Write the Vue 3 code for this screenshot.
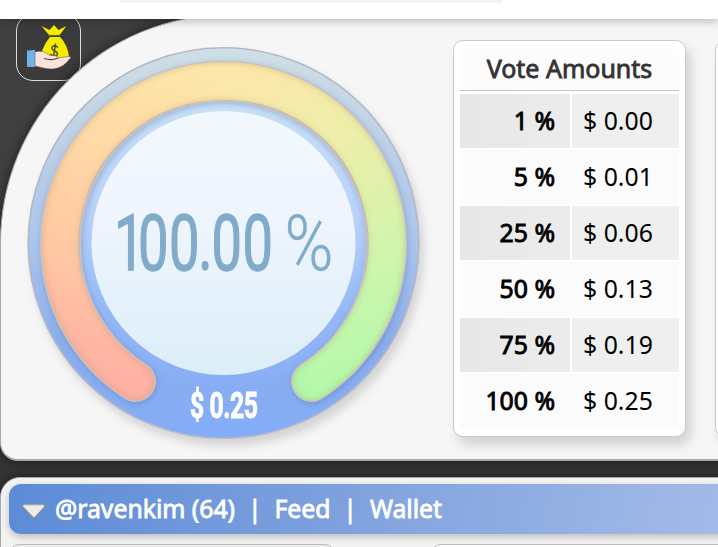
<script setup>
const votes = [
  { percent: '1 %', amount: '$ 0.00' },
  { percent: '5 %', amount: '$ 0.01' },
  { percent: '25 %', amount: '$ 0.06' },
  { percent: '50 %', amount: '$ 0.13' },
  { percent: '75 %', amount: '$ 0.19' },
  { percent: '100 %', amount: '$ 0.25' },
]
// gauge arc: two halves that meet at the top of the dial
const left = 'M111.5 339.5A163 163 0 0 1 200 38'
const right = 'M199 38A163 163 0 0 1 287.5 339.5'
const arc = 'M111.5 339.5A163 163 0 1 1 287.5 339.5'
</script>

<template>
  <div class="page">
    <header class="top"><div class="field"></div></header>

    <div class="money">
      <svg viewBox="0 0 65 66" width="65" height="66">
        <path d="M24.500 11l8 4 4.500-5 4.500 5 8-4-7 9H32z" fill="#f7ec00" />
        <path d="M31 20.500h13" stroke="#6b6500" stroke-width="1.200" />
        <path d="M33 22h10c5 5 8.500 13 9 20q-1 3-7 3H28q-4 0-4-5c1-6 5-13 9-18z" fill="#f7ec00" />
        <path d="M41 32.500q-3-3-5.500-1c-3 3.500 5.500 4.500 5 7.500-1 3.500-5 2-7 0M38.500 28.500l-2 14" fill="none" stroke="#4c4c20" stroke-width="1.500" />
        <path d="M10 35.500l8-.5v17h-8z" fill="#6db4ef" />
        <path d="M18 37c6-2 10 0 14 3 4 1 9 0 9 3l10-1.500c4 0 3 2 1 3-4 6-11 9.500-17 9.500-6 0-12-2-17-3z" fill="#fbe3da" stroke="#55403c" stroke-width=".5" />
        <path d="M27 43.500q8 2.500 14-.5" fill="none" stroke="#55403c" stroke-width="1.200" />
      </svg>
    </div>

    <section class="panel">
      <div class="dial">
        <svg viewBox="0 0 400 400" width="400" height="400">
          <defs>
            <linearGradient id="rim" x1="0" y1="0" x2="0" y2="1">
              <stop offset="0" stop-color="#cfdfe5" /><stop offset=".25" stop-color="#bdd0e6" />
              <stop offset=".5" stop-color="#abc5ed" /><stop offset=".75" stop-color="#8caeeb" /><stop offset="1" stop-color="#83adf9" />
            </linearGradient>
            <linearGradient id="halo" gradientUnits="userSpaceOnUse" x1="0" y1="55" x2="0" y2="345">
              <stop offset="0" stop-color="#cce2f6" /><stop offset=".4" stop-color="#b9d3fb" />
              <stop offset=".75" stop-color="#94b8f7" /><stop offset="1" stop-color="#88adf5" />
            </linearGradient>
            <linearGradient id="disc" x1="0" y1="0" x2="0" y2="1">
              <stop offset="0" stop-color="#f1f9fe" /><stop offset=".4" stop-color="#eef5fd" /><stop offset="1" stop-color="#dceef9" />
            </linearGradient>
            <linearGradient id="warm" gradientUnits="userSpaceOnUse" x1="199" y1="38" x2="90" y2="350">
              <stop offset="0" stop-color="#fde7a9" /><stop offset=".3" stop-color="#ffd9a6" />
              <stop offset=".65" stop-color="#ffc8a3" /><stop offset=".88" stop-color="#ffb6a4" /><stop offset="1" stop-color="#ffb0a3" />
            </linearGradient>
            <linearGradient id="cool" gradientUnits="userSpaceOnUse" x1="199" y1="38" x2="310" y2="350">
              <stop offset="0" stop-color="#fde7a9" /><stop offset=".3" stop-color="#ecefaa" />
              <stop offset=".6" stop-color="#d5f4ac" /><stop offset=".85" stop-color="#bff8ac" /><stop offset="1" stop-color="#b4f8aa" />
            </linearGradient>
            <filter id="soft" x="-10%" y="-10%" width="120%" height="120%"><feGaussianBlur stdDeviation="3" /></filter>
            <mask id="band" maskUnits="userSpaceOnUse" x="0" y="0" width="400" height="400">
              <path :d="arc" fill="none" stroke="#fff" stroke-width="38" stroke-linecap="round" />
            </mask>
            <mask id="edge" maskUnits="userSpaceOnUse" x="0" y="0" width="400" height="400">
              <rect width="400" height="400" fill="#fff" />
              <path :d="arc" fill="none" stroke="#000" stroke-width="36" stroke-linecap="round" filter="url(#soft)" />
            </mask>
          </defs>
          <circle cx="199.500" cy="201" r="195.300" fill="url(#rim)" stroke="#b3b8c8" stroke-width="1.600" />
          <circle cx="199.500" cy="201" r="143" fill="url(#halo)" />
          <path :d="arc" transform="translate(1 2)" fill="none" stroke="#5275a8" stroke-opacity=".42" stroke-width="41" stroke-linecap="round" filter="url(#soft)" />
          <circle cx="199.500" cy="201" r="132" fill="url(#disc)" />
          <path :d="arc" fill="none" stroke="#c9c3c6" stroke-width="41" stroke-linecap="round" />
          <g mask="url(#band)" fill="none">
            <path :d="left" stroke="url(#warm)" stroke-width="40" />
            <path d="M111.500 339.500h.1" stroke="#ffb1a3" stroke-width="40" stroke-linecap="round" />
            <path d="M287.500 339.500h.1" stroke="#b4f8aa" stroke-width="40" stroke-linecap="round" />
            <path :d="left" stroke="url(#warm)" stroke-width="40" />
            <path :d="right" stroke="url(#cool)" stroke-width="40" />
            <path :d="arc" stroke="#a08050" stroke-opacity=".27" stroke-width="45" stroke-linecap="round" mask="url(#edge)" />
          </g>
          <text class="percent" transform="translate(0 227.500) scale(.7 1)" x="128.500 163 207.300 249 267.800 312">100.00</text>
          <text class="sign" transform="translate(260.500 227.500) scale(.86 1)">%</text>
          <text class="worth" transform="translate(166 375.500) scale(.66 1)" textLength="103" lengthAdjust="spacing">$ 0.25</text>
        </svg>
      </div>

      <div class="card">
        <h2>Vote Amounts</h2>
        <div v-for="v in votes" :key="v.percent" class="row">
          <span class="pct">{{ v.percent }}</span>
          <span class="amt">{{ v.amount }}</span>
        </div>
      </div>
      <div class="card next"></div>
    </section>

    <section class="account">
      <nav class="bar">
        <svg class="caret" viewBox="0 0 26 18" width="26" height="18">
          <path d="M2 1.500h21l1 2-11 12L1.500 3.500z" fill="#ededeb" stroke="#8b8e90" stroke-width="1.200" stroke-linejoin="round" />
          <path d="M3 2h19" stroke="#bbb" />
        </svg>
        <span class="user">@ravenkim (64)</span><span class="sep">|</span><span>Feed</span><span class="sep">|</span><span>Wallet</span>
      </nav>
      <div class="boxes"><div class="box"></div><div class="box wide"></div></div>
    </section>
  </div>
</template>

<style>
body { margin: 0; }
</style>

<style scoped>
.page {
  position: relative;
  width: 718px;
  height: 547px;
  overflow: hidden;
  background: linear-gradient(#414141 0, #404040 240px, #343434 460px);
  font-family: "Noto Sans", sans-serif;
}
.top {
  position: relative;
  z-index: 3;
  height: 19px;
  background: #fff;
  box-shadow: 0 1px 11px rgba(0, 0, 0, .3);
}
.field {
  width: 384px;
  height: 3px;
  margin-left: 119px;
  background: #f4f4f4;
  border-radius: 0 0 12px 12px;
}
.money {
  position: absolute;
  left: 16px;
  top: 14px;
  width: 63px;
  height: 65px;
  border: 1.5px solid #ddd;
  border-radius: 17px;
  background: #3b3b3b;
}
.money svg { display: block; }
.panel {
  position: relative;
  z-index: 1;
  box-sizing: border-box;
  width: 760px;
  height: 447px;
  margin-top: -5px;
  padding: 27px 0 0 23px;
  display: flex;
  align-items: flex-start;
  background: #f6f6f6;
  border: 1px solid #a8a8a8;
  border-width: 1px 1px 2px 1px;
  border-radius: 229px 0 0 18px;
  box-shadow: 0 0 12px rgba(0, 0, 0, .55);
}
.dial {
  width: 400px;
  height: 400px;
  flex: none;
  margin-right: 29px;
  filter: drop-shadow(4px 7px 5px rgba(0, 0, 0, .14));
}
.dial svg { display: block; }
.percent {
  font: 400 77.500px Roboto, sans-serif;
  fill: #81abca;
  stroke: #81abca;
  stroke-width: 1.300px;
}
.sign {
  font: 300 77px Roboto, sans-serif;
  fill: #81abca;
  stroke: #81abca;
  stroke-width: .4px;
}
.worth {
  font: 700 37.500px Roboto, sans-serif;
  fill: #fff;
  stroke: #fff;
  stroke-width: .9px;
}
.card {
  box-sizing: border-box;
  flex: none;
  width: 233px;
  height: 397px;
  margin-top: -2px;
  padding: 8px 6px;
  background: #fff;
  border: 1px solid #c9c9c9;
  border-radius: 10px;
  box-shadow: 5px 8px 12px rgba(0, 0, 0, .15);
}
.card.next { margin-left: 29px; }
.card h2 {
  box-sizing: border-box;
  height: 42px;
  margin: 0 0 3px;
  background: #fcfcfc;
  border-bottom: 1.500px solid #c4c4c4;
  color: #333;
  font-size: 25px;
  font-weight: 400;
  line-height: 38px;
  text-align: center;
  -webkit-text-stroke: .8px #333;
}
.row {
  display: grid;
  grid-template-columns: 110px 1fr;
  column-gap: 2px;
  height: 54px;
  margin-bottom: 2px;
  font-size: 24.800px;
  line-height: 52px;
  color: #000;
  white-space: nowrap;
}
.row span { background: #fbfbfb; }
.row:nth-child(even) .pct { background: linear-gradient(90deg, #e7e7e7, #ececec); }
.row:nth-child(even) .amt { background: #efefef; }
.row:nth-child(odd) { column-gap: 0; grid-template-columns: 112px 1fr; }
.row:nth-child(odd) .pct { padding-right: 17px; }
.pct {
  padding-right: 15px;
  text-align: right;
  -webkit-text-stroke: .9px #000;
}
.amt { padding-left: 11px; }
.account {
  position: relative;
  z-index: 1;
  box-sizing: border-box;
  width: 760px;
  height: 100px;
  margin-top: 16px;
  padding: 6px 0 0 8px;
  background: #f3f3f3;
  border: 1px solid #a8a8a8;
  border-radius: 20px 0 0 0;
  box-shadow: 0 0 8px rgba(0, 0, 0, .5);
}
.bar {
  box-sizing: border-box;
  display: flex;
  align-items: center;
  height: 50px;
  padding-bottom: 2px;
  border-radius: 12px 0 0 12px;
  background: linear-gradient(100deg, #5c8bd7, #84a5df 52%, #a5bce8 98%);
  box-shadow: 0 3px 7px rgba(0, 0, 0, .22);
  color: #fff;
  font-size: 24.750px;
  white-space: nowrap;
  -webkit-text-stroke: .8px #fff;
}
.caret { margin: 7px 8px 0 12px; }
.sep { margin: 0 12.900px; }
.boxes { display: flex; gap: 96px; margin-top: 10px; }
.box {
  box-sizing: border-box;
  width: 326px;
  height: 40px;
  border: 1px solid #bdbdbd;
  border-radius: 10px;
  background: #eee;
}
.box.wide { flex: none; background: #fff; }
</style>
